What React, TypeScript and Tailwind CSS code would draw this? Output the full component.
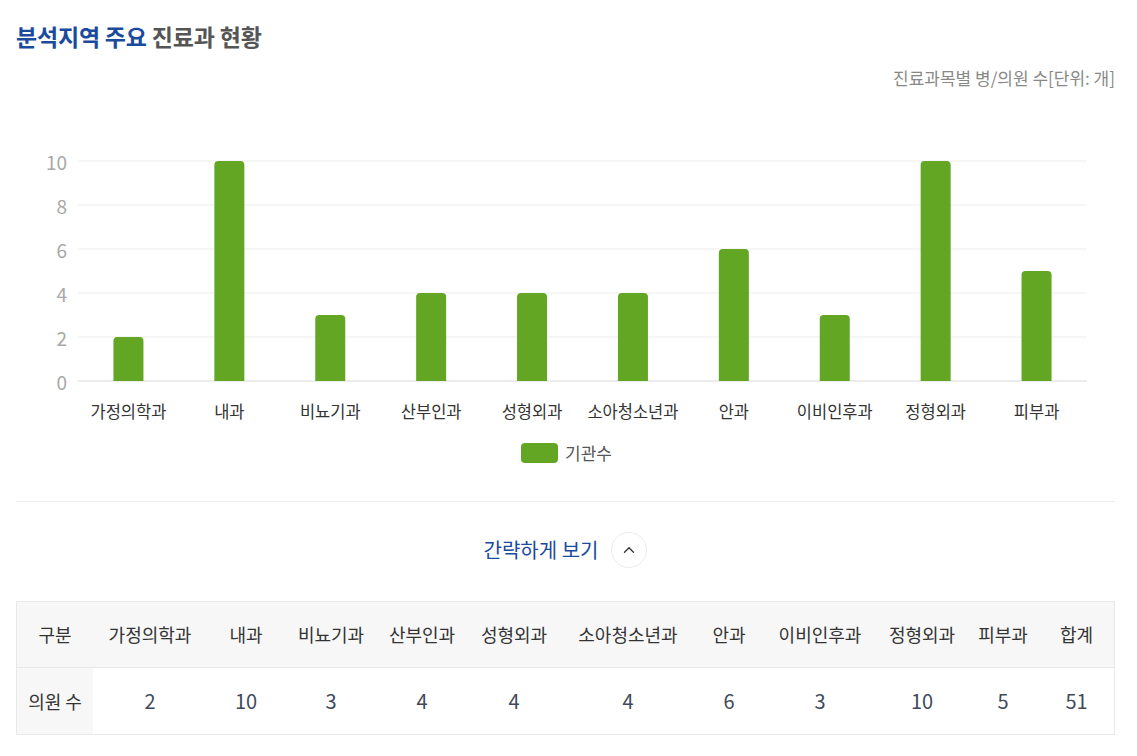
import { ChevronUp } from "lucide-react";

const data = [
  { name: "가정의학과", value: 2 },
  { name: "내과", value: 10 },
  { name: "비뇨기과", value: 3 },
  { name: "산부인과", value: 4 },
  { name: "성형외과", value: 4 },
  { name: "소아청소년과", value: 4 },
  { name: "안과", value: 6 },
  { name: "이비인후과", value: 3 },
  { name: "정형외과", value: 10 },
  { name: "피부과", value: 5 },
];

const total = data.reduce((s, d) => s + d.value, 0);

const FONT = '"Noto Sans CJK KR", "Noto Sans", sans-serif';

// chart geometry, in the svg's own coordinates (svg starts at x=16, y=100)
const PLOT_LEFT = 62;
const PLOT_RIGHT = 1071;
const BASE_Y = 281;
const UNIT = 22;
const BAR_W = 30;

function BarChart() {
  const step = (PLOT_RIGHT - PLOT_LEFT) / data.length;
  return (
    <svg width={1099} height={401} className="mt-[10px] block" style={{ fontFamily: FONT }}>
      {[0, 2, 4, 6, 8, 10].map((t) => {
        const y = BASE_Y - t * UNIT;
        return (
          <g key={t}>
            <line
              x1={PLOT_LEFT}
              x2={PLOT_RIGHT}
              y1={y}
              y2={y}
              stroke={t === 0 ? "#d9d9d9" : "#ececec"}
              strokeWidth={1}
            />
            <text x={51} y={y} textAnchor="end" dominantBaseline="central" fontSize={19} fill="#a8a8a8">
              {t}
            </text>
          </g>
        );
      })}
      {data.map((d, i) => {
        const cx = PLOT_LEFT + step * (i + 0.5);
        const h = d.value * UNIT;
        const x = cx - BAR_W / 2;
        const y = BASE_Y - h;
        const r = 4;
        return (
          <g key={d.name}>
            <path
              d={`M${x},${BASE_Y} V${y + r} Q${x},${y} ${x + r},${y} H${x + BAR_W - r} Q${x + BAR_W},${y} ${x + BAR_W},${y + r} V${BASE_Y} Z`}
              fill="#62a624"
            />
            <text x={cx} y={311} textAnchor="middle" dominantBaseline="central" fontSize={16.5} fill="#333">
              {d.name}
            </text>
          </g>
        );
      })}
      <rect x={505} y={343} width={37} height={20} rx={4} fill="#62a624" />
      <text x={549} y={352} dominantBaseline="central" fontSize={17} fill="#555">
        기관수
      </text>
    </svg>
  );
}

export default function App() {
  return (
    <div className="min-h-screen bg-white pl-4 pr-[22px] text-[#333]" style={{ fontFamily: FONT }}>
      <h2 className="pt-[21px] text-[23px] font-bold leading-[30px] tracking-[-0.2px]">
        <span className="text-[#1a4b9d]">분석지역 주요</span>{" "}
        <span className="text-[#555]">진료과 현황</span>
      </h2>
      <p className="mt-[15px] text-right text-[17px] leading-[24px] text-[#888]">
        진료과목별 병/의원 수[단위: 개]
      </p>

      <BarChart />

      <div className="border-t border-[#ececec]" />

      <div className="flex h-[99px] items-center justify-center gap-[13px] pb-[3px]">
        <span className="text-[20px] text-[#1a4b9d]">간략하게 보기</span>
        <button className="flex h-9 w-9 items-center justify-center rounded-full border border-[#ebebeb] bg-white">
          <ChevronUp className="h-[18px] w-[18px] text-[#333]" strokeWidth={1.75} />
        </button>
      </div>

      <div className="grid grid-cols-[76px_114px_78px_92px_90px_94px_134px_68px_114px_90px_72px_1fr] border border-[#e8e8e8] text-center">
        <div className="flex h-[65px] items-center justify-center bg-[#f7f7f7] text-[18px] text-[#333]">구분</div>
        {data.map((d) => (
          <div key={d.name} className="flex h-[65px] items-center justify-center bg-[#f7f7f7] text-[18px] text-[#333]">
            {d.name}
          </div>
        ))}
        <div className="flex h-[65px] items-center justify-center bg-[#f7f7f7] text-[18px] text-[#333]">합계</div>

        <div className="flex h-[67px] items-center justify-center border-t border-[#e8e8e8] bg-[#f7f7f7] text-[18px] text-[#333]">
          의원 수
        </div>
        {data.map((d) => (
          <div
            key={d.name}
            className="flex h-[67px] items-center justify-center border-t border-[#e8e8e8] text-[20px] text-[#3f4a5c]"
          >
            {d.value}
          </div>
        ))}
        <div className="flex h-[67px] items-center justify-center border-t border-[#e8e8e8] text-[20px] text-[#3f4a5c]">
          {total}
        </div>
      </div>
    </div>
  );
}
